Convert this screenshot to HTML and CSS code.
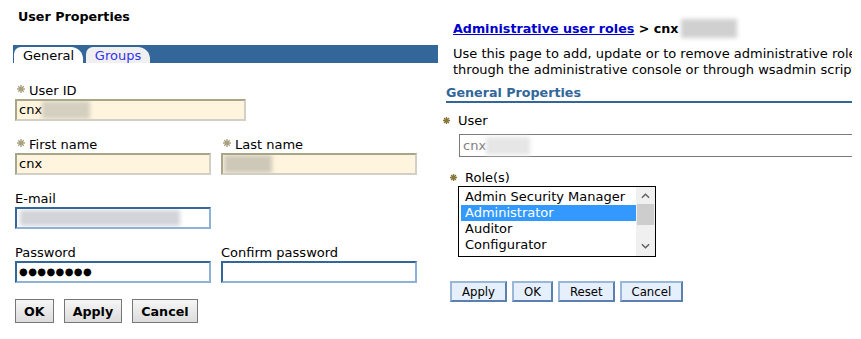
FILE: index.html
```html
<!DOCTYPE html>
<html lang="en">

<head>
    <meta charset="UTF-8">
    <title>User Properties</title>
    <link rel="stylesheet" href="styles.css">
</head>

<body>

    <!-- Left: user properties form -->
    <div class="left">
        <div class="title">User Properties</div>

        <div class="tabs">
            <span class="tab tab-active">General</span>
            <span class="tab tab-groups">Groups</span>
        </div>

        <div class="form">
            <div class="field">
                <label class="lbl"><svg class="star" viewBox="0 0 8 8"><path d="M4 0V8M0 4H8M1.2 1.2L6.8 6.8M6.8 1.2L1.2 6.8"/></svg>User ID</label>
                <div class="input req w-wide">cnx<span class="blur blur-id"></span></div>
            </div>

            <div class="row">
                <div class="field">
                    <label class="lbl"><svg class="star" viewBox="0 0 8 8"><path d="M4 0V8M0 4H8M1.2 1.2L6.8 6.8M6.8 1.2L1.2 6.8"/></svg>First name</label>
                    <div class="input req w-half">cnx</div>
                </div>
                <div class="field">
                    <label class="lbl"><svg class="star" viewBox="0 0 8 8"><path d="M4 0V8M0 4H8M1.2 1.2L6.8 6.8M6.8 1.2L1.2 6.8"/></svg>Last name</label>
                    <div class="input req w-half"><span class="blur blur-last"></span></div>
                </div>
            </div>

            <div class="field">
                <label class="lbl">E-mail</label>
                <div class="input plain w-half"><span class="blur blur-mail"></span></div>
            </div>

            <div class="row">
                <div class="field">
                    <label class="lbl">Password</label>
                    <div class="input plain w-half"><span class="dots">●●●●●●●●</span></div>
                </div>
                <div class="field">
                    <label class="lbl">Confirm password</label>
                    <div class="input plain w-half"></div>
                </div>
            </div>

            <div class="buttons">
                <button class="btn">OK</button>
                <button class="btn">Apply</button>
                <button class="btn">Cancel</button>
            </div>
        </div>
    </div>

    <!-- Right: administrative user roles -->
    <div class="right">
        <div class="crumb"><a href="#">Administrative user roles</a> &gt; cnx<span class="blur blur-crumb"></span></div>
        <p class="desc">Use this page to add, update or to remove administrative roles to users.<br>through the administrative console or through wsadmin scripting.</p>

        <div class="section-title">General Properties</div>

        <div class="prop">
            <div class="prop-lbl"><svg class="star star-dark" viewBox="0 0 8 8"><path d="M4 0V8M0 4H8M1.2 1.2L6.8 6.8M6.8 1.2L1.2 6.8"/></svg>User</div>
            <div class="text-box">cnx<span class="blur blur-user"></span></div>
        </div>

        <div class="prop prop-roles">
            <div class="prop-lbl"><svg class="star star-dark" viewBox="0 0 8 8"><path d="M4 0V8M0 4H8M1.2 1.2L6.8 6.8M6.8 1.2L1.2 6.8"/></svg>Role(s)</div>
            <div class="listbox">
                <div class="options">
                    <div class="opt">Admin Security Manager</div>
                    <div class="opt opt-selected">Administrator</div>
                    <div class="opt">Auditor</div>
                    <div class="opt">Configurator</div>
                </div>
                <div class="scrollbar">
                    <svg class="arrow" viewBox="0 0 10 6"><path d="M1 5L5 1L9 5"/></svg>
                    <div class="thumb"></div>
                    <svg class="arrow arrow-down" viewBox="0 0 10 6"><path d="M1 1L5 5L9 1"/></svg>
                </div>
            </div>
        </div>

        <div class="actions">
            <button class="btn-blue">Apply</button>
            <button class="btn-blue">OK</button>
            <button class="btn-blue">Reset</button>
            <button class="btn-blue">Cancel</button>
        </div>
    </div>

</body>

</html>
```

FILE: styles.css
```css
body {
    margin: 0;
    display: flex;
    background-color: #ffffff;
    font-family: "DejaVu Sans", Verdana, sans-serif;
    font-size: 13px;
    color: #000000;
}

/* Left panel */
.left {
    width: 440px;
    flex: none;
    padding: 9px 0 0 15px;
    box-sizing: border-box;
}

.title {
    margin-left: 3px;
    font-size: 12.7px;
    font-weight: bold;
    line-height: 15px;
}

.tabs {
    margin: 21px 0 0 -2px;
    width: 425px;
    height: 18px;
    background-color: #336699;
    display: flex;
    align-items: flex-end;
    gap: 3px;
    padding-left: 1px;
    box-sizing: border-box;
}

.tab {
    width: 69px;
    height: 16px;
    line-height: 17px;
    text-align: center;
    background-color: #f0f0f0;
    color: #3333ee;
    border-radius: 7px 12px 0 0;
}

.tab-groups {
    width: 64px;
}

.tab-active {
    background-color: #ffffff;
    color: #000000;
}

.form {
    display: flex;
    flex-direction: column;
    gap: 16px;
    padding-top: 20px;
}

.row {
    display: flex;
    gap: 10px;
}

.field {
    display: flex;
    flex-direction: column;
}

.lbl {
    display: flex;
    align-items: center;
    line-height: 16px;
}

.star {
    width: 8px;
    height: 8px;
    margin: 0 4px 4px 2px;
    stroke: #a9a27f;
    stroke-width: 1.4;
}

.star-dark {
    width: 7px;
    height: 7px;
    stroke: #857633;
    stroke-width: 1.5;
}

.input {
    height: 22px;
    box-sizing: border-box;
    padding-left: 2px;
    line-height: 18px;
    overflow: hidden;
    white-space: nowrap;
    display: flex;
    align-items: center;
}

.req {
    background-color: #fff5df;
    border: 2px solid;
    border-color: #a8a688 #d2d0c4 #d2d0c4 #a8a688;
}

.plain {
    background-color: #ffffff;
    border: 2px solid;
    border-color: #336699 #8eb2d6 #8eb2d6 #336699;
}

.w-wide { width: 231px; }
.w-half { width: 196px; }

.dots {
    font-size: 10px;
    letter-spacing: 0.4px;
}

/* Blurred-out values */
.blur {
    display: inline-block;
    filter: blur(2px);
}

.blur-id { width: 48px; height: 18px; background-color: #d4cfbf; }
.blur-last { width: 48px; height: 18px; margin-left: -1px; background-color: #cdc8b8; }
.blur-mail { width: 160px; height: 16px; margin-left: 1px; background-color: #d2d4d9; }
.blur-user { width: 44px; height: 18px; background-color: #e6e6e6; }
.blur-crumb { width: 56px; height: 19px; margin-left: 2px; vertical-align: -5px; background-color: #d0d0d0; }

.buttons {
    display: flex;
    gap: 10px;
}

.btn {
    height: 24px;
    padding: 0 8px;
    font-family: "DejaVu Sans", Verdana, sans-serif;
    font-size: 12.7px;
    font-weight: bold;
    color: #000000;
    background: linear-gradient(#f6f6f6, #dcdcdc);
    border: 1px solid #777777;
}

/* Right panel */
.right {
    width: 412px;
    flex: none;
    overflow: hidden;
    padding: 19px 0 0 3px;
    box-sizing: border-box;
}

.crumb {
    margin-left: 10px;
    font-size: 12.7px;
    font-weight: bold;
    line-height: 15px;
    white-space: nowrap;
}

.crumb a {
    color: #0000cc;
}

.desc {
    margin: 8px 0 0 10px;
    line-height: 16px;
    white-space: nowrap;
}

.section-title {
    margin: 7px 0 0 3px;
    width: 406px;
    color: #336699;
    font-size: 12.7px;
    font-weight: bold;
    line-height: 15px;
    padding-bottom: 1px;
    border-bottom: 2px solid #336699;
}

.prop {
    margin-top: 10px;
}

.prop-lbl {
    display: flex;
    align-items: center;
    line-height: 16px;
}

.prop-lbl .star {
    margin: 0 8px 2px 0;
}

.text-box {
    margin: 5px 0 0 16px;
    width: 430px;
    height: 23px;
    box-sizing: border-box;
    border: 1px solid #7a7a7a;
    padding-left: 3px;
    color: #808080;
    display: flex;
    align-items: center;
    white-space: nowrap;
}

.prop-roles {
    margin-top: 13px;
}

.prop-roles .prop-lbl {
    margin-left: 7px;
}

.listbox {
    margin-left: 15px;
    width: 198px;
    height: 71px;
    box-sizing: border-box;
    border: 1px solid #000000;
    display: flex;
}

.options {
    flex: 1;
    padding: 2px 0 0 2px;
}

.opt {
    height: 16px;
    line-height: 16px;
    padding-left: 4px;
    white-space: nowrap;
}

.opt-selected {
    background-color: #3399ff;
    color: #ffffff;
}

.scrollbar {
    width: 19px;
    background-color: #f0f0f0;
    display: flex;
    flex-direction: column;
    align-items: center;
}

.arrow {
    width: 9px;
    height: 6px;
    margin: 6px 0 5px;
    fill: none;
    stroke: #606060;
    stroke-width: 1.6;
}

.arrow-down {
    margin: auto 0 7px;
}

.thumb {
    width: 17px;
    height: 21px;
    background-color: #cdcdcd;
}

.actions {
    margin: 24px 0 0 7px;
    display: flex;
    gap: 5px;
}

.btn-blue {
    height: 21px;
    padding: 0 10px;
    font-family: "DejaVu Sans Condensed", Tahoma, sans-serif;
    font-size: 13px;
    color: #000000;
    background-color: #e6effc;
    border: 2px solid;
    border-color: #9ab6d8 #5b80b0 #5b80b0 #9ab6d8;
}
```
